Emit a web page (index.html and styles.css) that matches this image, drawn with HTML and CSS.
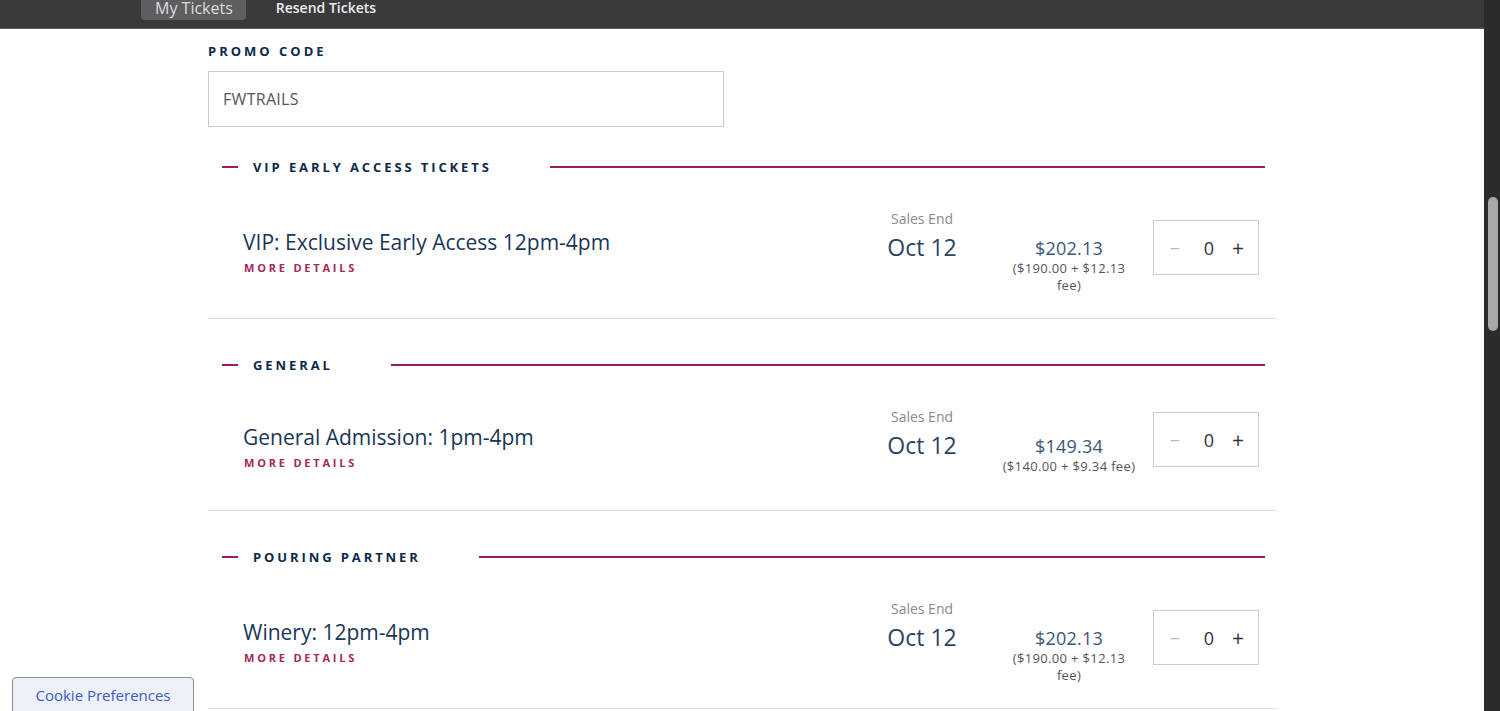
FILE: index.html
```html
<!DOCTYPE html>
<html lang="en">
<head>
<meta charset="utf-8">
<title>Tickets</title>
<link rel="stylesheet" href="styles.css">
</head>
<body>
<div class="window">
  <div class="page">
    <nav class="topbar">
      <a class="tab tab-active">My Tickets</a>
      <a class="tab tab-link">Resend Tickets</a>
    </nav>
    <main class="content">
      <div class="promo">
        <div class="label">PROMO CODE</div>
        <div class="promo-input">FWTRAILS</div>
      </div>

      <section class="section first">
        <div class="section-header">
          <span class="dash"></span>
          <h2 class="section-title">VIP EARLY ACCESS TICKETS</h2>
          <span class="rule"></span>
        </div>
        <div class="ticket">
          <div class="ticket-name">
            <div class="name">VIP: Exclusive Early Access 12pm-4pm</div>
            <div class="more">MORE DETAILS</div>
          </div>
          <div class="sales">
            <div class="sales-label">Sales End</div>
            <div class="sales-date">Oct 12</div>
          </div>
          <div class="price">
            <div class="price-total">$202.13</div>
            <div class="price-sub">($190.00 + $12.13 fee)</div>
          </div>
          <div class="qty">
            <span class="qty-minus">&minus;</span>
            <span class="qty-val">0</span>
            <span class="qty-plus">+</span>
          </div>
        </div>
      </section>

      <section class="section">
        <div class="section-header">
          <span class="dash"></span>
          <h2 class="section-title">GENERAL</h2>
          <span class="rule"></span>
        </div>
        <div class="ticket">
          <div class="ticket-name">
            <div class="name">General Admission: 1pm-4pm</div>
            <div class="more">MORE DETAILS</div>
          </div>
          <div class="sales">
            <div class="sales-label">Sales End</div>
            <div class="sales-date">Oct 12</div>
          </div>
          <div class="price">
            <div class="price-total">$149.34</div>
            <div class="price-sub">($140.00 + $9.34 fee)</div>
          </div>
          <div class="qty">
            <span class="qty-minus">&minus;</span>
            <span class="qty-val">0</span>
            <span class="qty-plus">+</span>
          </div>
        </div>
      </section>

      <section class="section">
        <div class="section-header">
          <span class="dash"></span>
          <h2 class="section-title">POURING PARTNER</h2>
          <span class="rule"></span>
        </div>
        <div class="ticket">
          <div class="ticket-name">
            <div class="name">Winery: 12pm-4pm</div>
            <div class="more">MORE DETAILS</div>
          </div>
          <div class="sales">
            <div class="sales-label">Sales End</div>
            <div class="sales-date">Oct 12</div>
          </div>
          <div class="price">
            <div class="price-total">$202.13</div>
            <div class="price-sub">($190.00 + $12.13 fee)</div>
          </div>
          <div class="qty">
            <span class="qty-minus">&minus;</span>
            <span class="qty-val">0</span>
            <span class="qty-plus">+</span>
          </div>
        </div>
      </section>
    </main>
  </div>
  <div class="scrollbar"><div class="thumb"></div></div>
  <button class="cookie">Cookie Preferences</button>
</div>
</body>
</html>
```

FILE: styles.css
```css
html, body {
  margin: 0;
  padding: 0;
  height: 711px;
  overflow: hidden;
  background: #ffffff;
  font-family: "Open Sans", "Noto Sans", sans-serif;
}

.window {
  display: flex;
  height: 711px;
  position: relative;
}

.page {
  flex: 1;
  min-width: 0;
  display: flex;
  flex-direction: column;
}

.scrollbar {
  width: 16px;
  background: #2b2b2b;
  position: relative;
}

.thumb {
  position: absolute;
  left: 4px;
  top: 197px;
  width: 10px;
  height: 134px;
  border-radius: 5px;
  background: #a8a8a8;
}

/* top bar */
.topbar {
  flex-shrink: 0;
  height: 28px;
  background: #3a3a3c;
  border-bottom: 1px solid #5d5d60;
  display: flex;
  align-items: flex-start;
  padding-left: 141px;
  gap: 30px;
}

.tab {
  display: block;
  height: 20px;
  line-height: 16px;
  white-space: nowrap;
}

.tab-active {
  background: #5e5e61;
  color: #dcdcdc;
  font-size: 16px;
  padding: 0 13px 0 14px;
  border-radius: 0 0 4px 4px;
}

.tab-link {
  color: #ececec;
  font-size: 14px;
  font-weight: 600;
  line-height: 16px;
}

/* content */
.content {
  flex-shrink: 0;
  width: 1068px;
  margin-left: 208px;
}

.promo {
  padding-top: 13px;
}

.label {
  font-size: 13px;
  line-height: 18px;
  font-weight: 700;
  letter-spacing: 3px;
  color: #0d2a4a;
}

.promo-input {
  margin-top: 11px;
  width: 500px;
  height: 54px;
  border: 1px solid #cccccc;
  padding-left: 14px;
  font-size: 16px;
  letter-spacing: 0.3px;
  line-height: 54px;
  color: #555555;
}

.section {
  border-bottom: 1px solid #dedede;
  padding-top: 36px;
}

.section.first {
  padding-top: 30px;
}

.section-header {
  height: 20px;
  display: flex;
  align-items: center;
  padding-left: 14px;
  padding-right: 11px;
}

.dash {
  width: 16px;
  height: 2px;
  background: #9c1f5d;
}

.section-title {
  margin: 0 0 0 15px;
  font-size: 13px;
  line-height: 20px;
  font-weight: 700;
  letter-spacing: 2.9px;
  color: #0d2a4a;
  white-space: nowrap;
}

.rule {
  flex: 1;
  height: 2px;
  background: #9c1f5d;
  margin-left: 58px;
}

.ticket {
  display: flex;
  align-items: flex-start;
  padding: 33px 17px 24px 35px;
  min-height: 78px;
}

.ticket-name {
  flex: 1;
  align-self: center;
}

.name {
  font-size: 21px;
  line-height: 26px;
  color: #1a3657;
}

.more {
  margin-top: 5px;
  margin-left: 1px;
  font-size: 11px;
  line-height: 16px;
  font-weight: 700;
  letter-spacing: 2.8px;
  color: #a3285f;
}

.sales {
  width: 100px;
  text-align: center;
}

.sales-label {
  font-size: 14px;
  line-height: 18px;
  color: #8a8a8a;
}

.sales-date {
  margin-top: 4px;
  font-size: 23px;
  line-height: 30px;
  color: #2b4463;
}

.price {
  width: 138px;
  margin-left: 28px;
  margin-top: 26px;
  text-align: center;
}

.price-total {
  font-size: 18px;
  letter-spacing: 0.2px;
  line-height: 24px;
  color: #3d5577;
}

.price-sub {
  font-size: 13px;
  letter-spacing: 0.35px;
  line-height: 17px;
  color: #555555;
}

.qty {
  flex-shrink: 0;
  align-self: flex-end;
  margin-left: 15px;
  margin-bottom: 19px;
  width: 104px;
  height: 53px;
  border: 1px solid #cccccc;
  display: flex;
  align-items: center;
}

.qty-minus {
  width: 20px;
  margin-left: 11px;
  text-align: center;
  font-size: 18px;
  color: #bbbbbb;
}

.qty-val {
  width: 20px;
  margin-left: 14px;
  text-align: center;
  font-size: 18px;
  color: #333333;
}

.qty-plus {
  width: 20px;
  margin-left: 9px;
  text-align: center;
  font-size: 21px;
  color: #333333;
}

.cookie {
  position: absolute;
  left: 12px;
  bottom: -6px;
  width: 182px;
  height: 40px;
  padding: 0 0 4px 0;
  border: 1px solid #8e8e8e;
  border-radius: 4px;
  background: #edf0f8;
  font-family: "Open Sans", "Noto Sans", sans-serif;
  font-size: 15px;
  color: #3a5fc2;
}
```
